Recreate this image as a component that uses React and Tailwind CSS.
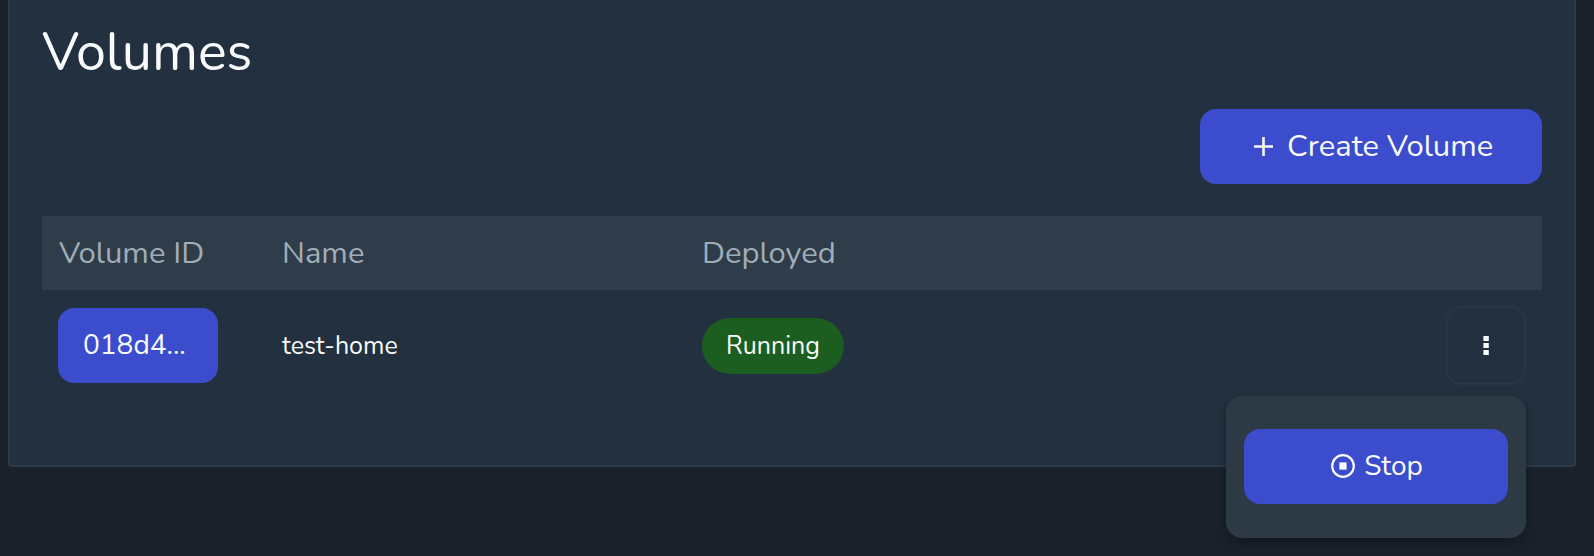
import React from "react";

const primary = "flex h-[75px] items-center rounded-2xl bg-[#3b4ccd] text-[#f8faff]";

function StopIcon() {
  return (
    <svg width="24" height="24" viewBox="0 0 24 24" className="shrink-0">
      <circle cx="12" cy="12" r="10.8" fill="none" stroke="currentColor" strokeWidth="2.2" />
      <rect x="8.4" y="8.4" width="7.2" height="7.2" fill="currentColor" />
    </svg>
  );
}

function PlusIcon() {
  return (
    <svg width="19" height="19" viewBox="0 0 19 19" className="shrink-0">
      <path d="M9.5 0V19M0 9.5H19" stroke="currentColor" strokeWidth="2.6" />
    </svg>
  );
}

function DotsIcon() {
  return (
    <svg width="6" height="20" viewBox="0 0 6 20" fill="currentColor">
      <rect x="0.4" y="0" width="5.4" height="5" />
      <rect x="0.4" y="7" width="5.4" height="5" />
      <rect x="0.4" y="14" width="5.4" height="5" />
    </svg>
  );
}

export default function App() {
  return (
    <div className="h-[556px] overflow-hidden bg-[#1a212b] px-2 font-['Nunito','Open_Sans',sans-serif] font-normal text-[#f8fafc]">
      <div className="h-[467px] w-[1568px] rounded-b-[4px] border-2 border-t-0 border-[#2d3a48] bg-[#23303f] px-8">
        <h1 className="h-[109px] pt-[17px] text-[53.8px] leading-[72px]">Volumes</h1>
        <div className="flex justify-end">
          <button className={primary + " w-[342px] pl-[54px] text-[31px] whitespace-nowrap"}>
            <PlusIcon />
            <span className="ml-3.5">Create Volume</span>
          </button>
        </div>
        <div className="mt-8 grid h-[74px] grid-cols-[224px_420px_1fr] items-center bg-[#2f3c49] px-4 text-[31px] text-[#a0adb9]">
          <div className="pl-px">Volume ID</div>
          <div>Name</div>
          <div>Deployed</div>
        </div>
        <div className="mt-4 grid h-[80px] grid-cols-[224px_420px_1fr_80px] items-center px-4">
          <button className={primary + " mb-px w-[160px] pl-[25px] pb-px text-[28px]"}>
            <span>018d4...</span>
          </button>
          <div className="pt-px text-[25px]">test-home</div>
          <div>
            <span className="flex h-14 w-[142px] items-center justify-center rounded-full bg-[#1b5e20] pt-0.5 text-[25px]">
              <span>Running</span>
            </span>
          </div>
          <div className="relative self-start">
            <button className="flex h-[79px] w-20 items-center justify-center rounded-2xl border-2 border-[#293645]">
              <DotsIcon />
            </button>
            <div className="absolute top-[90px] right-0 h-[142px] w-[300px] rounded-2xl bg-[#2d3a46] px-[18px] pt-[33px] shadow-[0_4px_12px_rgba(0,0,0,0.3)]">
              <button className={primary + " w-[264px] justify-center gap-[9px] pb-px pl-0.5 text-[28px]"}>
                <StopIcon />
                <span>Stop</span>
              </button>
            </div>
          </div>
        </div>
      </div>
    </div>
  );
}
